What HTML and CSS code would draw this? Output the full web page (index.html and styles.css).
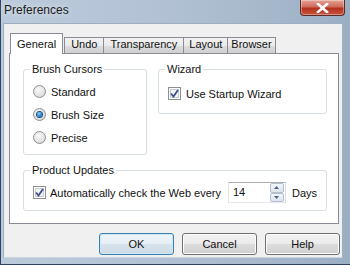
FILE: index.html
```html
<!DOCTYPE html>
<html lang="en">
<head>
    <meta charset="UTF-8">
    <meta name="viewport" content="width=device-width, initial-scale=1.0">
    <title>Preferences</title>
    <link rel="stylesheet" href="styles.css">
</head>
<body>
    <div class="window">
        <div class="titlebar">
            <span class="title">Preferences</span>
            <button class="close-button">
                <svg width="13" height="10" viewBox="0 0 13 10">
                    <path d="M2 1 L11 9 M11 1 L2 9" stroke="#fff" stroke-width="2.6" stroke-linecap="square" fill="none"/>
                </svg>
            </button>
        </div>
        <div class="client">
            <div class="tabs">
                <div class="tab active">General</div>
                <div class="tab">Undo</div>
                <div class="tab">Transparency</div>
                <div class="tab tab-layout">Layout</div>
                <div class="tab tab-browser">Browser</div>
            </div>
            <div class="panel">
                <div class="row">
                    <fieldset class="group brush-group">
                        <legend>Brush Cursors</legend>
                        <label class="option"><span class="radio"></span>Standard</label>
                        <label class="option"><span class="radio checked"></span>Brush Size</label>
                        <label class="option"><span class="radio"></span>Precise</label>
                    </fieldset>
                    <fieldset class="group wizard-group">
                        <legend>Wizard</legend>
                        <label class="option">
                            <span class="checkbox">
                                <svg width="9" height="9" viewBox="0 0 9 9"><path d="M1 4.5 L3.5 7.5 L8 1" stroke="#3b4f8c" stroke-width="1.8" fill="none"/></svg>
                            </span>Use Startup Wizard
                        </label>
                    </fieldset>
                </div>
                <fieldset class="group update-group">
                    <legend>Product Updates</legend>
                    <div class="update-row">
                        <span class="checkbox">
                            <svg width="9" height="9" viewBox="0 0 9 9"><path d="M1 4.5 L3.5 7.5 L8 1" stroke="#3b4f8c" stroke-width="1.8" fill="none"/></svg>
                        </span>
                        <span class="update-text">Automatically check the Web every</span>
                        <div class="spin-field">
                            <span class="spin-value">14</span>
                            <div class="spinner">
                                <span class="spin-btn"><svg width="5" height="3" viewBox="0 0 5 3"><path d="M0 3 L2.5 0 L5 3Z" fill="#4d6185"/></svg></span>
                                <span class="spin-btn"><svg width="5" height="3" viewBox="0 0 5 3"><path d="M0 0 L2.5 3 L5 0Z" fill="#4d6185"/></svg></span>
                            </div>
                        </div>
                        <span>Days</span>
                    </div>
                </fieldset>
            </div>
            <div class="buttons">
                <button class="button default">OK</button>
                <button class="button">Cancel</button>
                <button class="button">Help</button>
            </div>
        </div>
    </div>
</body>
</html>
```

FILE: styles.css
```css
html, body {
    margin: 0;
    padding: 0;
}
body {
    width: 350px;
    height: 265px;
    overflow: hidden;
    font-family: "Liberation Sans", Arial, sans-serif;
    font-size: 11px;
    color: #111;
}
.window {
    width: 350px;
    height: 265px;
    box-sizing: border-box;
    padding: 0 7px 7px 3px;
    display: flex;
    flex-direction: column;
    background: linear-gradient(to right, #bccbdc 0%, #b2c2d4 45%, #a7b8cb 75%, #9bafc4 100%);
    box-shadow: inset 1px 0 0 #2f4360, inset 0 -1px 0 #2f4360;
}
.titlebar {
    height: 23px;
    display: flex;
    justify-content: space-between;
    align-items: flex-start;
    margin: 0 -2px 0 -3px;
}
.title {
    padding-left: 4px;
    line-height: 21px;
    font-size: 12px;
    color: #1b1b1b;
    text-shadow: 0 0 6px rgba(255,255,255,0.8);
}
.close-button {
    width: 45px;
    height: 16px;
    margin: 0;
    padding: 0;
    border: 1px solid #5d2a2a;
    border-top: none;
    border-radius: 0 0 4px 4px;
    background: linear-gradient(#e5a396 0%, #cf6b5c 45%, #b3301f 55%, #c9553d 100%);
    box-shadow: inset 0 0 0 1px rgba(255,255,255,0.35);
    display: flex;
    align-items: center;
    justify-content: center;
}
.client {
    flex: 1;
    background: #f0f0f0;
    border: 1px solid #9caec2;
    border-bottom-color: #c9d4df;
    padding: 9px 3px 0 5px;
    display: flex;
    flex-direction: column;
}
/* tabs */
.tabs {
    display: flex;
    align-items: flex-end;
    height: 20px;
    padding-left: 1px;
}
.tab {
    box-sizing: border-box;
    border: 1px solid #898c95;
    border-bottom: none;
    border-left: none;
    padding: 0 6px 2px;
    line-height: 13px;
    background: linear-gradient(#f2f2f2 0%, #ebebeb 50%, #dddddd 51%, #cfcfcf 100%);
    white-space: nowrap;
}
.tab.active {
    border-left: 1px solid #898c95;
    border-right: 1px solid #898c95;
    padding: 4px 6px 3px;
    margin-bottom: -1px;
    background: #fff;
    position: relative;
    z-index: 1;
}
.tab.active + .tab {
    border-left: 1px solid #898c95;
    margin-left: 1px;
}
.tab-layout {
    padding: 0 5px 2px;
}
.tab-browser {
    padding: 0 3px 2px;
}
.panel {
    box-sizing: border-box;
    width: 330px;
    height: 171px;
    border: 1px solid #898c95;
    background: #fff;
    padding: 9px 11px 0 13px;
}
.row {
    display: flex;
    align-items: flex-start;
    gap: 11px;
}
/* group boxes */
.group {
    margin: 0;
    padding: 4px 9px 3px;
    border: 1px solid #d5dfe5;
    border-radius: 3px;
    box-shadow: inset 0 0 0 1px #fff;
    min-width: 0;
}
.group legend {
    padding: 0 2px;
    margin-left: -3px;
    line-height: 13px;
}
.brush-group {
    width: 124px;
    box-sizing: border-box;
    padding-bottom: 5px;
}
.wizard-group {
    flex: 1;
    padding-top: 6px;
    padding-bottom: 8px;
}
.update-group {
    margin-top: 9px;
    padding-top: 5px;
    padding-bottom: 7px;
}
.option {
    display: flex;
    align-items: center;
    height: 23px;
    gap: 5px;
}
.radio {
    width: 13px;
    height: 13px;
    box-sizing: border-box;
    border-radius: 50%;
    border: 1px solid #8e8f8f;
    background: radial-gradient(circle at 40% 35%, #f8f8f8 0%, #e4e4e4 55%, #cfcfcf 100%);
    display: flex;
    align-items: center;
    justify-content: center;
}
.radio.checked::after {
    content: "";
    width: 5px;
    height: 5px;
    border-radius: 50%;
    background: radial-gradient(circle at 40% 35%, #8ad3fb 0%, #2a8ad4 50%, #0d4f8f 100%);
    box-shadow: 0 0 0 1px #1c5180;
}
.checkbox {
    width: 13px;
    height: 13px;
    box-sizing: border-box;
    border: 1px solid #8e8f8f;
    background: #f4f4f4;
    box-shadow: inset 0 0 0 1px #fff, inset 0 0 0 2px #c5cbd3;
    display: flex;
    align-items: center;
    justify-content: center;
    flex-shrink: 0;
}
.update-row {
    display: flex;
    align-items: center;
    height: 21px;
}
.update-text {
    margin-left: 4px;
    margin-right: 7px;
    white-space: nowrap;
}
.spin-field {
    box-sizing: border-box;
    width: 59px;
    height: 21px;
    border: 1px solid #abadb3;
    border-color: #abadb3 #dbdfe6 #e3e9ef #e2e3ea;
    background: #fff;
    display: flex;
    margin-right: 6px;
}
.spin-value {
    flex: 1;
    padding-left: 4px;
    line-height: 19px;
}
.spinner {
    width: 14px;
    margin: 0 1px 0 0;
    display: flex;
    flex-direction: column;
}
.spin-btn {
    flex: 1;
    box-sizing: border-box;
    border: 1px solid #b4bfcc;
    border-radius: 2px;
    background: linear-gradient(#f3f6fa, #dde4ec);
    display: flex;
    align-items: center;
    justify-content: center;
}
/* dialog buttons */
.buttons {
    display: flex;
    justify-content: flex-end;
    gap: 8px;
    margin-top: 9px;
    margin-right: -1px;
}
.button {
    width: 75px;
    height: 22px;
    box-sizing: border-box;
    padding: 0;
    margin: 0;
    border: 1px solid #707070;
    border-radius: 3px;
    background: linear-gradient(#f2f2f2 0%, #ebebeb 50%, #dddddd 51%, #cfcfcf 100%);
    box-shadow: inset 0 0 0 1px #fcfcfc;
    font-family: "Liberation Sans", Arial, sans-serif;
    font-size: 11px;
    color: #111;
}
.button.default {
    border-color: #3c7fb1;
    box-shadow: inset 0 0 0 1px #c8e8f8;
    background: linear-gradient(#f0f6fa 0%, #e6eef4 50%, #d7e3ec 51%, #cddbe6 100%);
}
```
